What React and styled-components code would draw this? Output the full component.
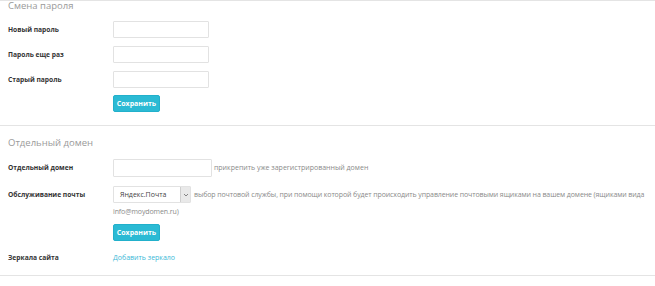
import React from "react";
import styled, { createGlobalStyle } from "styled-components";

const GlobalStyle = createGlobalStyle`
  html, body { margin: 0; padding: 0; background: #fff; }
  body { font-family: "Open Sans", "Liberation Sans", sans-serif; color: #333; }
  * { box-sizing: border-box; }
`;

const Page = styled.div`
  width: 655px;
  height: 286px;
  overflow: hidden;
  background: #fff;
`;

const Section = styled.section`
  border-top: 1px solid #e4e4e4;
  padding: ${(p) => p.$pt}px 8px ${(p) => p.$pb}px 8px;
  &:last-child { border-bottom: 1px solid #e4e4e4; }
`;

const Heading = styled.h3`
  margin: 0 0 ${(p) => p.$mb}px;
  font-size: 9.5px;
  line-height: 10px;
  font-weight: 400;
  color: #9a9a9a;
`;

const Row = styled.div`
  display: grid;
  grid-template-columns: 105px 1fr;
  align-items: start;
  margin-top: ${(p) => p.$mt || 0}px;
`;

const Label = styled.label`
  font-size: 6.7px;
  font-weight: 700;
  line-height: ${(p) => p.$lh || 17}px;
  color: #333;
`;

const Field = styled.div`
  font-size: 7px;
  line-height: 17px;
  color: #8a8a8a;
`;

const Input = styled.input`
  display: ${(p) => (p.$inline ? "inline-block" : "block")};
  vertical-align: middle;
  width: ${(p) => p.$w}px;
  height: ${(p) => p.$h || 17}px;
  margin: 0;
  padding: 0 4px;
  border: 1px solid #e2e2e2;
  border-radius: 1px;
  background: #fff;
  outline: none;
`;

const Help = styled.span`
  margin-left: 2px;
  font-size: 7px;
  color: #8a8a8a;
`;

const Description = styled.span`
  letter-spacing: -0.1px;
`;

const SelectBox = styled.span`
  display: inline-flex;
  vertical-align: top;
  width: 78px;
  height: 17px;
  margin-right: 3px;
  border: 1px solid #e2e2e2;
  border-radius: 1px;
  background: #fff;
`;

const SelectValue = styled.span`
  flex: 1;
  padding-left: 6px;
  font-size: 7px;
  line-height: 15px;
  color: #444;
`;

const SelectArrow = styled.span`
  width: 10px;
  display: flex;
  align-items: center;
  justify-content: center;
  background: #e9e9e9;
  border-left: 1px solid #cfcfcf;
`;

const Button = styled.button`
  display: block;
  width: 47px;
  height: 17px;
  padding: 0;
  border: 1px solid #22b0cb;
  border-radius: 2px;
  background: #2bbad4;
  color: #fff;
  font-family: "Open Sans", "Liberation Sans", sans-serif;
  font-size: 7px;
  font-weight: 700;
  cursor: pointer;
`;

const Link = styled.a`
  font-size: 7px;
  line-height: 17px;
  color: #3cb9d7;
  text-decoration: none;
`;

const Chevron = () => (
  <svg width="6" height="4" viewBox="0 0 6 4">
    <path d="M1 1 L3 3 L5 1" fill="none" stroke="#777" strokeWidth="0.9" />
  </svg>
);

export default function App() {
  return (
    <Page>
      <GlobalStyle />
      <Section $pt={0} $pb={13}>
        <Heading $mb={10}>Смена пароля</Heading>
        <Row>
          <Label>Новый пароль</Label>
          <Field><Input type="password" $w={96} /></Field>
        </Row>
        <Row $mt={8}>
          <Label>Пароль еще раз</Label>
          <Field><Input type="password" $w={96} /></Field>
        </Row>
        <Row $mt={8}>
          <Label>Старый пароль</Label>
          <Field><Input type="password" $w={96} /></Field>
        </Row>
        <Row $mt={7}>
          <span />
          <Field><Button>Сохранить</Button></Field>
        </Row>
      </Section>
      <Section $pt={12} $pb={9}>
        <Heading $mb={11}>Отдельный домен</Heading>
        <Row>
          <Label $lh={18}>Отдельный домен</Label>
          <Field>
            <Input $inline $w={99} $h={18} />
            <Help>прикрепить уже зарегистрированный домен</Help>
          </Field>
        </Row>
        <Row $mt={9}>
          <Label>Обслуживание почты</Label>
          <Field>
            <SelectBox>
              <SelectValue>Яндекс.Почта</SelectValue>
              <SelectArrow><Chevron /></SelectArrow>
            </SelectBox>
            <Description>
              выбор почтовой службы, при помощи которой будет происходить управление почтовыми ящиками на вашем домене (ящиками вида info@moydomen.ru)
            </Description>
          </Field>
        </Row>
        <Row $mt={4}>
          <span />
          <Field><Button>Сохранить</Button></Field>
        </Row>
        <Row $mt={8}>
          <Label>Зеркала сайта</Label>
          <Field><Link href="#">Добавить зеркало</Link></Field>
        </Row>
      </Section>
    </Page>
  );
}
